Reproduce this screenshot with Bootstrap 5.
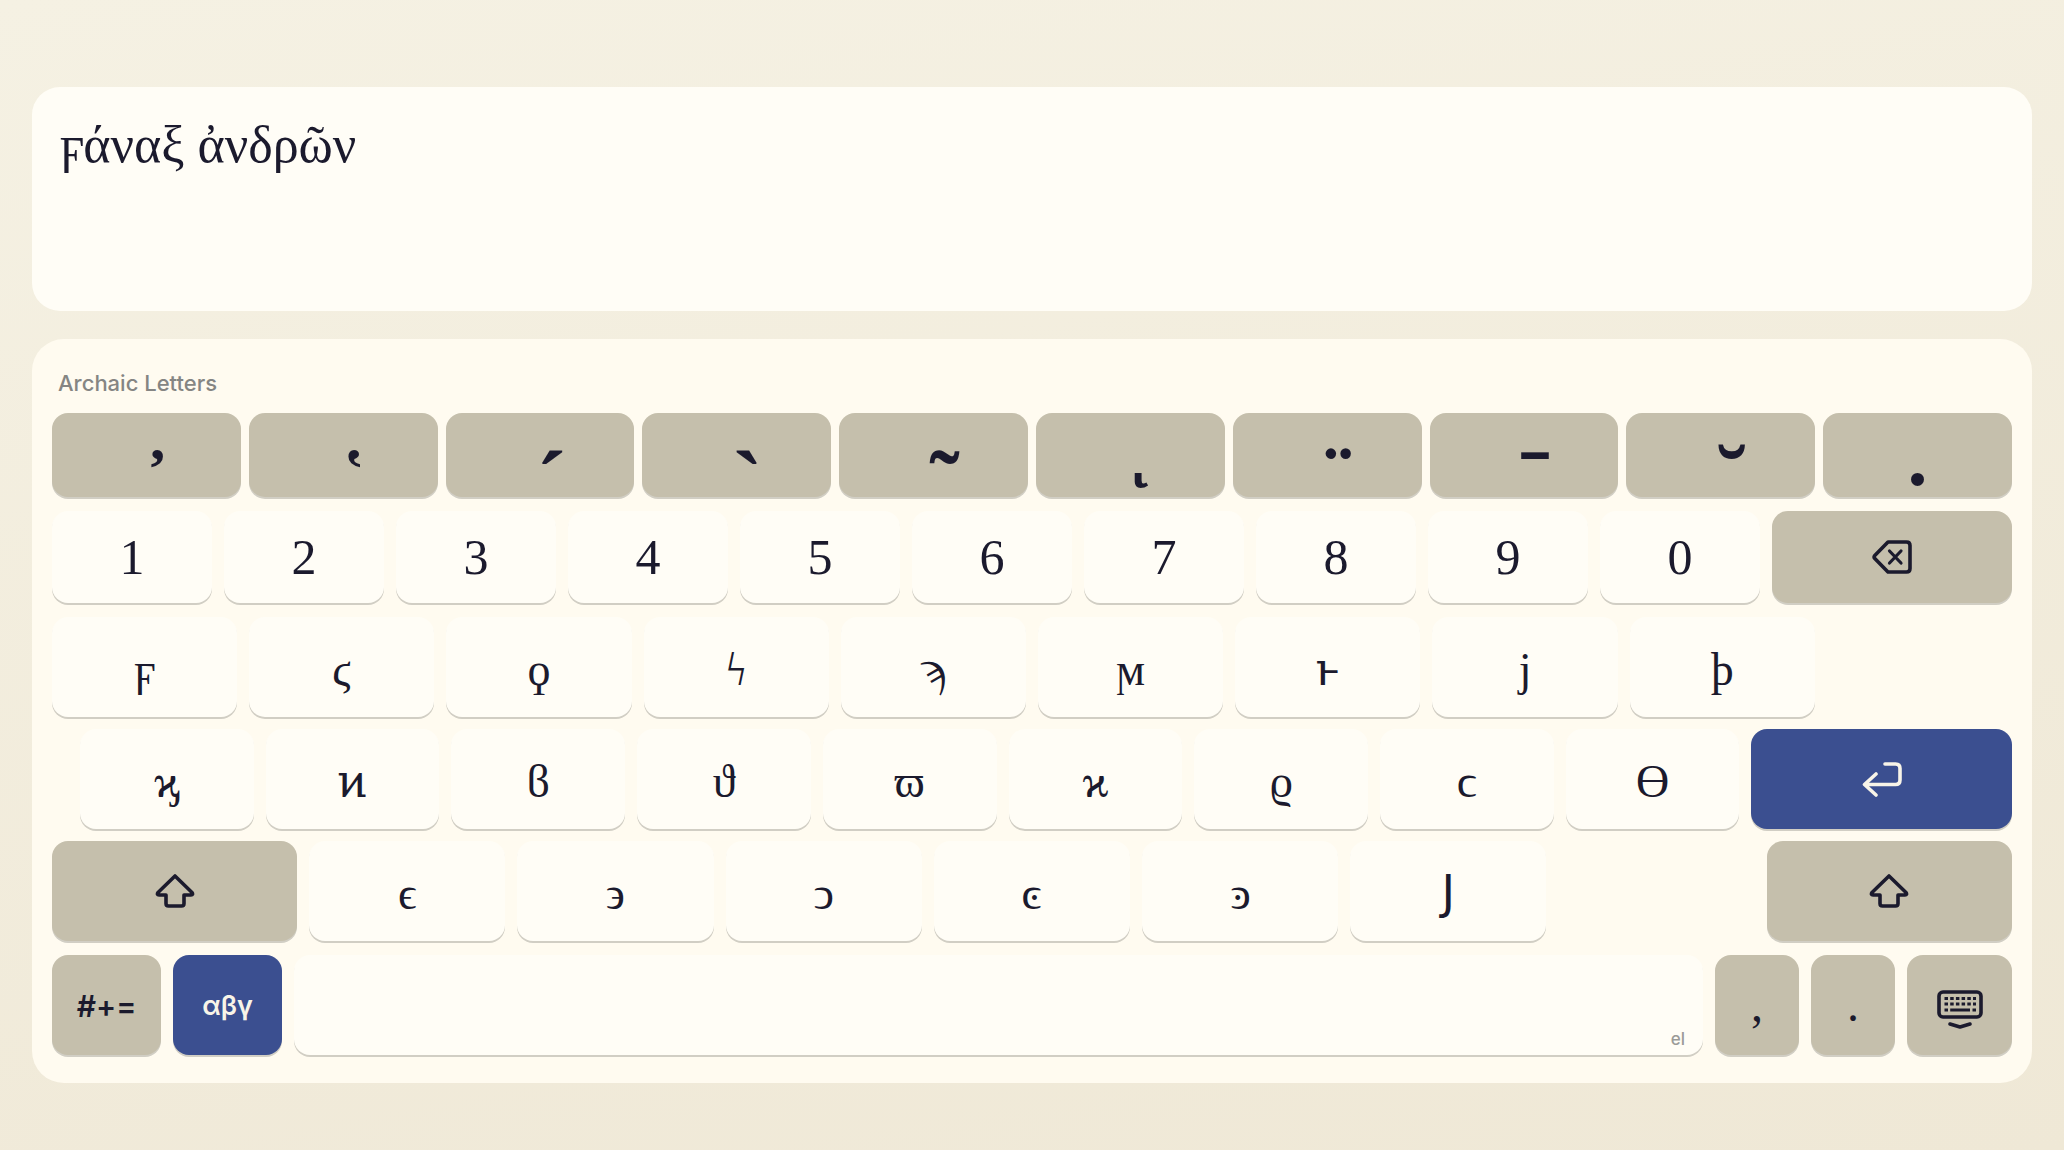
<!DOCTYPE html>
<html lang="el">
<head>
<meta charset="utf-8">
<meta name="viewport" content="width=device-width, initial-scale=1">
<title>Archaic Letters</title>
<link href="https://cdn.jsdelivr.net/npm/bootstrap@5.3.0/dist/css/bootstrap.min.css" rel="stylesheet">
<style>
:root { --ink: #1b1a2d; --stone: #c5bfac; --navy: #3b4f90; --ivory: #fffdf6; --edge: #d1cec4; }
body { min-height: 100vh; background: linear-gradient(170deg, #f5f1e3, #efe8d6); color: var(--ink); font-family: Inter, "Noto Sans", sans-serif; }
.shell { padding: 87px 32px 67px; gap: 28px; }
.editor { height: 224px; padding: 24px 28px; border: 0; border-radius: 28px; background: var(--ivory); color: var(--ink); resize: none;
  font-family: "Liberation Serif", "DejaVu Serif", serif; font-size: 52px; line-height: 68px; }
.editor:focus { background: var(--ivory); color: var(--ink); }
.keyboard { padding: 24px 20px 28px; border-radius: 32px; background: #fffbf0; }
.layout-name { padding-left: 6px; margin-bottom: 10px; font-size: 22px; font-weight: 500; line-height: 40px; color: #858583; }
.keys { gap: 12px; margin-bottom: 12px; height: 100px; }
.keys.accents { gap: 8px; height: 84px; margin-bottom: 14px; }
.keys.digits { height: 92px; margin-bottom: 14px; }
.keys.wide-gap { margin-bottom: 14px; }
.key { --bs-btn-padding-x: 0; --bs-btn-padding-y: 0; --bs-btn-border-width: 0; --bs-btn-border-radius: 16px;
  --bs-btn-color: var(--ink); --bs-btn-hover-color: var(--ink); --bs-btn-bg: var(--ivory); --bs-btn-hover-bg: var(--ivory);
  flex: 1 1 0; min-width: 0; display: flex; align-items: center; justify-content: center; box-shadow: 0 2px 0 var(--edge);
  font-family: "Liberation Serif", "DejaVu Serif", serif; font-size: 48px; line-height: 60px; }
.digits .key { font-size: 50px; }
.letters .key:not(.stone, .navy) { padding-top: 6px; font-size: 46px; }
.key.stone { --bs-btn-bg: var(--stone); --bs-btn-hover-bg: var(--stone); }
.key.navy { --bs-btn-bg: var(--navy); --bs-btn-hover-bg: var(--navy); --bs-btn-color: #f8f4e8; --bs-btn-hover-color: #f8f4e8; }
.key.ui { padding-top: 2px; font-family: Inter, "Noto Sans", sans-serif; font-size: 27px; font-weight: 600; }
.key.ui.symbols { font-size: 30px; }
.letters .key.sans:not(.stone) { padding-top: 0; font-family: Lato, Roboto, "DejaVu Sans", sans-serif; font-weight: 500; }
.accents .key { padding-top: 58px; font-size: 90px; font-weight: 700; line-height: 24px; text-indent: 22px; }
.accents .key.raised { padding-top: 48px; }
.accents .key.below { padding: 0 0 34px; }
.accents .key.centred { padding: 6px 0 0; font-size: 80px; text-indent: 0; }
.blank { flex: 1 1 0; }
.indent { flex: 0 0 16px; }
.grow-back { flex: 0 0 240px; }
.grow-shift { flex-grow: 1.25; }
.grow-enter { flex-grow: 1.5; }
.grow-mode { flex-grow: 109; }
.grow-space { flex-grow: 1409; align-items: flex-end; justify-content: flex-end; }
.grow-punct { flex-grow: 84; }
.grow-hide { flex-grow: 105; }
.lang { margin: 0 18px 4px 0; font-family: Inter, sans-serif; font-size: 17px; font-weight: 500; line-height: 24px; color: #9b9b98; }
svg { fill: none; stroke: currentColor; stroke-width: 3.6; stroke-linecap: round; stroke-linejoin: round; }
</style>
</head>
<body>
<main class="shell container-fluid d-flex flex-column">
  <textarea class="editor form-control shadow-none" aria-label="Text" spellcheck="false">ϝάναξ ἀνδρῶν</textarea>

  <section class="keyboard" aria-label="Keyboard">
    <div class="layout-name">Archaic Letters</div>

    <div class="keys accents d-flex">
      <button type="button" class="btn key stone">᾿</button>
      <button type="button" class="btn key stone">῾</button>
      <button type="button" class="btn key stone">´</button>
      <button type="button" class="btn key stone">`</button>
      <button type="button" class="btn key stone">˜</button>
      <button type="button" class="btn key stone below">ͺ</button>
      <button type="button" class="btn key stone raised">¨</button>
      <button type="button" class="btn key stone raised">ˉ</button>
      <button type="button" class="btn key stone raised">˘</button>
      <button type="button" class="btn key stone centred">.</button>
    </div>

    <div class="keys digits d-flex">
      <button type="button" class="btn key">1</button>
      <button type="button" class="btn key">2</button>
      <button type="button" class="btn key">3</button>
      <button type="button" class="btn key">4</button>
      <button type="button" class="btn key">5</button>
      <button type="button" class="btn key">6</button>
      <button type="button" class="btn key">7</button>
      <button type="button" class="btn key">8</button>
      <button type="button" class="btn key">9</button>
      <button type="button" class="btn key">0</button>
      <button type="button" class="btn key stone grow-back" aria-label="Delete">
        <svg width="40" height="34" viewBox="0 0 40 34"><path d="M16 2H34.500Q38 2 38 5.500V28.500Q38 32 34.500 32H16L2.800 18.600Q1.400 17 2.800 15.400Z"/><path stroke-width="3.200" d="M17.500 11 29 23M29 11 17.500 23"/></svg>
      </button>
    </div>

    <div class="keys letters d-flex">
      <button type="button" class="btn key">ϝ</button>
      <button type="button" class="btn key">ϛ</button>
      <button type="button" class="btn key">ϙ</button>
      <button type="button" class="btn key">ϟ</button>
      <button type="button" class="btn key">ϡ</button>
      <button type="button" class="btn key">ϻ</button>
      <button type="button" class="btn key">ͱ</button>
      <button type="button" class="btn key">ϳ</button>
      <button type="button" class="btn key">ϸ</button>
      <span class="blank"></span>
    </div>

    <div class="keys letters d-flex">
      <span class="indent"></span>
      <button type="button" class="btn key">ϗ</button>
      <button type="button" class="btn key">ͷ</button>
      <button type="button" class="btn key">ϐ</button>
      <button type="button" class="btn key">ϑ</button>
      <button type="button" class="btn key">ϖ</button>
      <button type="button" class="btn key">ϰ</button>
      <button type="button" class="btn key">ϱ</button>
      <button type="button" class="btn key">ϲ</button>
      <button type="button" class="btn key">ϴ</button>
      <button type="button" class="btn key navy grow-enter" aria-label="Return">
        <svg width="40" height="36" viewBox="0 0 40 36"><path d="M23 3H33.500Q38 3 38 7.500V19Q38 23.500 33.500 23.500H3M14 13 2.500 23.500 14 34"/></svg>
      </button>
    </div>

    <div class="keys letters wide-gap d-flex">
      <button type="button" class="btn key stone grow-shift" aria-label="Shift">
        <svg width="40" height="34" viewBox="0 0 40 34"><path d="M20 2 37 18.500Q38.500 21 36 21H29V29.500Q29 32 26.500 32H13.500Q11 32 11 29.500V21H4Q1.500 21 3 18.500Z"/></svg>
      </button>
      <button type="button" class="btn key">ϵ</button>
      <button type="button" class="btn key">϶</button>
      <button type="button" class="btn key">ͻ</button>
      <button type="button" class="btn key">ͼ</button>
      <button type="button" class="btn key">ͽ</button>
      <button type="button" class="btn key sans">Ϳ</button>
      <span class="blank"></span>
      <button type="button" class="btn key stone grow-shift" aria-label="Shift">
        <svg width="40" height="34" viewBox="0 0 40 34"><path d="M20 2 37 18.500Q38.500 21 36 21H29V29.500Q29 32 26.500 32H13.500Q11 32 11 29.500V21H4Q1.500 21 3 18.500Z"/></svg>
      </button>
    </div>

    <div class="keys mb-0 d-flex">
      <button type="button" class="btn key stone ui symbols grow-mode">#+=</button>
      <button type="button" class="btn key navy ui grow-mode">αβγ</button>
      <button type="button" class="btn key grow-space" aria-label="Space"><span class="lang">el</span></button>
      <button type="button" class="btn key stone grow-punct">,</button>
      <button type="button" class="btn key stone grow-punct">.</button>
      <button type="button" class="btn key stone grow-hide" aria-label="Hide keyboard">
        <svg width="46" height="48" viewBox="0 0 46 48"><rect x="2" y="11" width="42" height="25" rx="4"/><path d="M13 43 23 46 33 43"/><path stroke-width="3" stroke-linecap="butt" stroke-dasharray="3.500 2.200" d="M7.500 17.500H39M7.500 23H39"/><path stroke-width="3" stroke-linecap="butt" d="M7.500 29H11M13.200 29H33M35.500 29H39"/></svg>
      </button>
    </div>
  </section>
</main>
<script src="https://cdn.jsdelivr.net/npm/bootstrap@5.3.0/dist/js/bootstrap.bundle.min.js"></script>
</body>
</html>
